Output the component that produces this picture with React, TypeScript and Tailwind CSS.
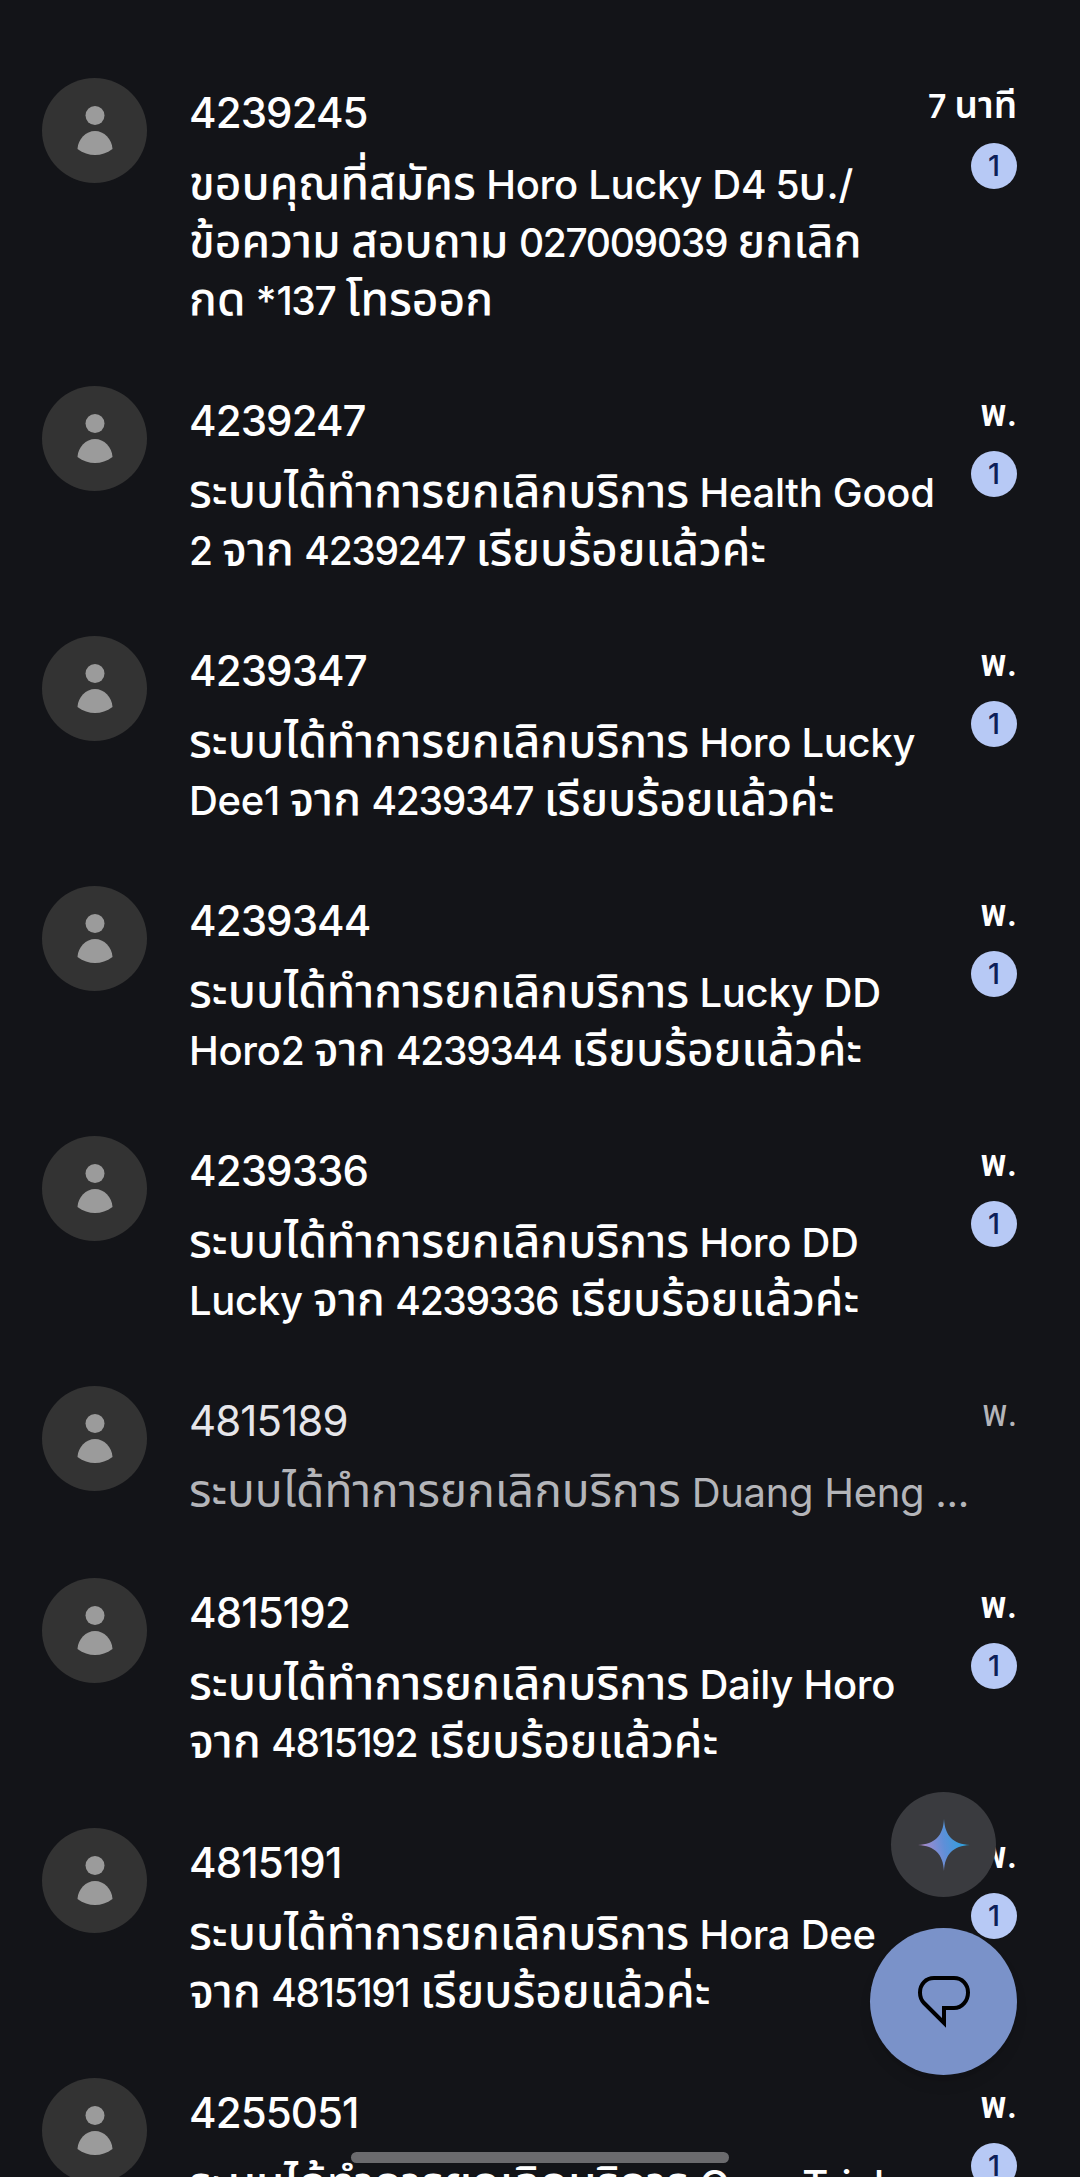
const threads = [
  { name: "4239245", time: "7 นาที", unread: true, lines: ["ขอบคุณที่สมัคร Horo Lucky D4 5บ./", "ข้อความ สอบถาม 027009039 ยกเลิก", "กด *137 โทรออก"] },
  { name: "4239247", time: "พ.", unread: true, lines: ["ระบบได้ทำการยกเลิกบริการ Health Good", "2 จาก 4239247 เรียบร้อยแล้วค่ะ"] },
  { name: "4239347", time: "พ.", unread: true, lines: ["ระบบได้ทำการยกเลิกบริการ Horo Lucky", "Dee1 จาก 4239347 เรียบร้อยแล้วค่ะ"] },
  { name: "4239344", time: "พ.", unread: true, lines: ["ระบบได้ทำการยกเลิกบริการ Lucky DD", "Horo2 จาก 4239344 เรียบร้อยแล้วค่ะ"] },
  { name: "4239336", time: "พ.", unread: true, lines: ["ระบบได้ทำการยกเลิกบริการ Horo DD", "Lucky จาก 4239336 เรียบร้อยแล้วค่ะ"] },
  { name: "4815189", time: "พ.", unread: false, lines: ["ระบบได้ทำการยกเลิกบริการ Duang Heng ..."] },
  { name: "4815192", time: "พ.", unread: true, lines: ["ระบบได้ทำการยกเลิกบริการ Daily Horo", "จาก 4815192 เรียบร้อยแล้วค่ะ"] },
  { name: "4815191", time: "พ.", unread: true, lines: ["ระบบได้ทำการยกเลิกบริการ Hora Dee", "จาก 4815191 เรียบร้อยแล้วค่ะ"] },
  { name: "4255051", time: "พ.", unread: true, lines: ["ระบบได้ทำการยกเลิกบริการ Guru Trick", "จาก 4255051 เรียบร้อยแล้วค่ะ"] },
];

// Thai runs sit a little larger than the Latin around them; digit runs are set tighter.
function Mixed({ text, thaiClass, digitClass = "" }: { text: string; thaiClass: string; digitClass?: string }) {
  return (
    <>
      {text.split(/([\u0E00-\u0E7F]+|[0-9]+)/).map((part, i) => {
        if (i % 2 === 0) return <span key={i}>{part}</span>;
        const isDigits = /^[0-9]+$/.test(part);
        return <span key={i} className={isDigits ? digitClass : thaiClass}>{part}</span>;
      })}
    </>
  );
}

function Avatar() {
  return (
    <div className="flex h-[105px] w-[105px] shrink-0 items-center justify-center rounded-full bg-[#333333]">
      <svg width="36" height="49" viewBox="0 0 36 49" className="fill-[#9b9b9b]">
        <circle cx="18" cy="9.5" r="9.5" />
        <path d="M0.5 43 C1 33 9 25 18 25 C27 25 35 33 35.5 43 C30 47 24 49 18 49 C12 49 6 47 0.5 43 Z" />
      </svg>
    </div>
  );
}

function Row({ name, time, unread, lines }: { name: string; time: string; unread: boolean; lines: string[] }) {
  return (
    <div className="flex pb-[59px] pl-[42px] pr-[63px]">
      <Avatar />
      <div className="ml-[42px] min-w-0 flex-1 pt-[9px]">
        <div className={`text-[42px] leading-[52px] tracking-[-0.9px] ${unread ? "font-medium text-white" : "text-[#e6e6ea]"}`}>{name}</div>
        <div className={`mt-[14px] text-[40px] leading-[58px] tracking-[-0.3px] ${unread ? "font-medium text-white" : "text-[#b4b5b9]"}`}>
          {lines.map((l) => (
            <div key={l} className="h-[58px] whitespace-nowrap">
              <Mixed text={l} thaiClass="text-[46px] tracking-normal" digitClass="text-[39px] tracking-[-1.3px]" />
            </div>
          ))}
        </div>
      </div>
      <div className="flex w-[60px] flex-col items-end">
        <div className={`h-[50px] whitespace-nowrap pt-[6px] text-[32px] leading-[42px] ${unread ? "font-semibold text-white" : "text-[#b4b5b9]"}`}>
          <Mixed text={time} thaiClass="text-[37px]" />
        </div>
        {unread && (
          <div className="mt-[15px] flex h-[46px] w-[46px] items-center justify-center rounded-full bg-[#b7c9f5] text-[29px] font-medium text-[#0d2058]">1</div>
        )}
      </div>
    </div>
  );
}

export default function App() {
  return (
    <div className="relative h-[2177px] w-[1080px] overflow-hidden bg-[#131418] pt-[78px]" style={{ fontFamily: '"Inter", "Noto Sans Thai", "Noto Sans", sans-serif' }}>
      {threads.map((t) => (
        <Row key={t.name} {...t} />
      ))}

      {/* Assistant shortcut */}
      <div className="absolute left-[891px] top-[1792px] flex h-[105px] w-[105px] items-center justify-center rounded-full bg-[#3a3b3f]">
        <svg width="52" height="52" viewBox="0 0 52 52">
          <defs>
            <linearGradient id="spark" x1="0" y1="0.6" x2="1" y2="0.4">
              <stop offset="0" stopColor="#b98ac9" />
              <stop offset="0.5" stopColor="#5f8fd8" />
              <stop offset="1" stopColor="#1fa5e0" />
            </linearGradient>
          </defs>
          <path d="M26 0 C27 17 35 25 52 26 C35 27 27 35 26 52 C25 35 17 27 0 26 C17 25 25 17 26 0 Z" fill="url(#spark)" />
        </svg>
      </div>

      {/* Start chat button */}
      <div className="absolute left-[870px] top-[1928px] flex h-[147px] w-[147px] items-center justify-center rounded-full bg-[#7a92c9] shadow-lg">
        <svg width="54" height="54" viewBox="0 0 54 54" fill="none" stroke="#000" strokeWidth="4">
          <path d="M17 3 H37 C45 3 51 9 51 17.5 C51 26 45 33 37 33 H27 V48 L7 28 C4 25 3 21 3 17.5 C3 9 9 3 17 3 Z" />
        </svg>
      </div>

      {/* Gesture bar */}
      <div className="absolute left-[351px] top-[2152px] h-[11px] w-[378px] rounded-full bg-[#6b6b6e]" />
    </div>
  );
}
